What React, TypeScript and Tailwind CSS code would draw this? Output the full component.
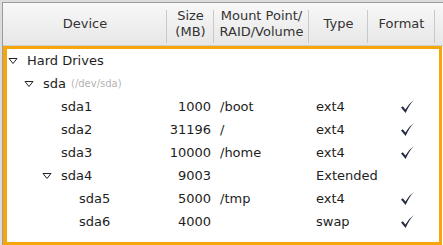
import React from 'react';

type Row = {
  name: string;
  level: number;
  expander?: boolean;
  hint?: string;
  size?: string;
  mount?: string;
  type?: string;
  format?: boolean;
};

const rows: Row[] = [
  { name: 'Hard Drives', level: 0, expander: true },
  { name: 'sda', level: 1, expander: true, hint: '(/dev/sda)' },
  { name: 'sda1', level: 2, size: '1000', mount: '/boot', type: 'ext4', format: true },
  { name: 'sda2', level: 2, size: '31196', mount: '/', type: 'ext4', format: true },
  { name: 'sda3', level: 2, size: '10000', mount: '/home', type: 'ext4', format: true },
  { name: 'sda4', level: 2, expander: true, size: '9003', type: 'Extended' },
  { name: 'sda5', level: 3, size: '5000', mount: '/tmp', type: 'ext4', format: true },
  { name: 'sda6', level: 3, size: '4000', type: 'swap', format: true },
];

// indent of the expander per level
const indents = ['w-[1px]', 'w-[17px]', 'w-[35px]', 'w-[53px]'];

function Expander() {
  return (
    <svg width="10" height="8" viewBox="0 0 10 8" className="shrink-0">
      <polygon points="1,1.5 9,1.5 5,6.5" fill="none" stroke="#222" strokeWidth="1" />
    </svg>
  );
}

function Check() {
  return (
    <svg width="15" height="15" viewBox="0 0 15 15">
      <path d="M1 8.6 L2.8 7.3 L5.4 10.6 Q8.6 4.6 14 1 Q9.4 5.6 5.6 14 Z" fill="#262b45" />
    </svg>
  );
}

function HeaderCell({ children, w, last }: { children: React.ReactNode; w: string; last?: boolean }) {
  return (
    <div className={`${w} h-full flex items-center relative`}>
      <div className="flex-1 text-center leading-[16px]">{children}</div>
      {!last && <div className="absolute right-0 top-[7px] bottom-[2px] w-px bg-[#c9c9c9]" />}
    </div>
  );
}

export default function App() {
  return (
    <div
      className="w-[443px] h-[245px] bg-[#dcdcdc] pt-[2px] pl-[2px] overflow-hidden text-[13px]"
      style={{ fontFamily: '"DejaVu Sans", Verdana, sans-serif' }}
    >
      <div className="w-[441px] h-[243px] border-t border-l border-[#9c9c9c] bg-white flex flex-col">
        {/* Column headers */}
        <div className="h-[43px] shrink-0 flex text-[#333] bg-gradient-to-b from-[#f8f8f8] to-[#e7e7e7] border-b border-[#cfcfcf]">
          <HeaderCell w="w-[164px]">Device</HeaderCell>
          <HeaderCell w="w-[47px]">
            Size
            <br />
            (MB)
          </HeaderCell>
          <HeaderCell w="w-[95px]">
            Mount Point/
            <br />
            RAID/Volume
          </HeaderCell>
          <HeaderCell w="w-[59px]">Type</HeaderCell>
          <HeaderCell w="w-[67px]">Format</HeaderCell>
          <div className="flex-1" />
        </div>

        {/* Tree body with focus ring */}
        <div className="flex-1 border-[3px] border-l-4 border-[#f5a60a] mr-[1px] text-[#1e1e1e]">
          {rows.map((r) => (
            <div key={r.name} className="h-[23px] flex items-center">
              <div className="w-[160px] flex items-center">
                <div className={indents[r.level]} />
                {r.expander ? <Expander /> : <div className="w-[10px]" />}
                <span className="ml-[9px]">{r.name}</span>
                {r.hint && <span className="ml-[5px] text-[10px] text-[#b3b3b3]">{r.hint}</span>}
              </div>
              <div className="w-[47px] text-right pr-[3px]">{r.size}</div>
              <div className="w-[95px] pl-[6px]">{r.mount}</div>
              <div className="w-[59px] pl-[7px]">{r.type}</div>
              <div className="w-[67px] pl-[32px] flex items-center">{r.format && <Check />}</div>
            </div>
          ))}
        </div>
      </div>
    </div>
  );
}
